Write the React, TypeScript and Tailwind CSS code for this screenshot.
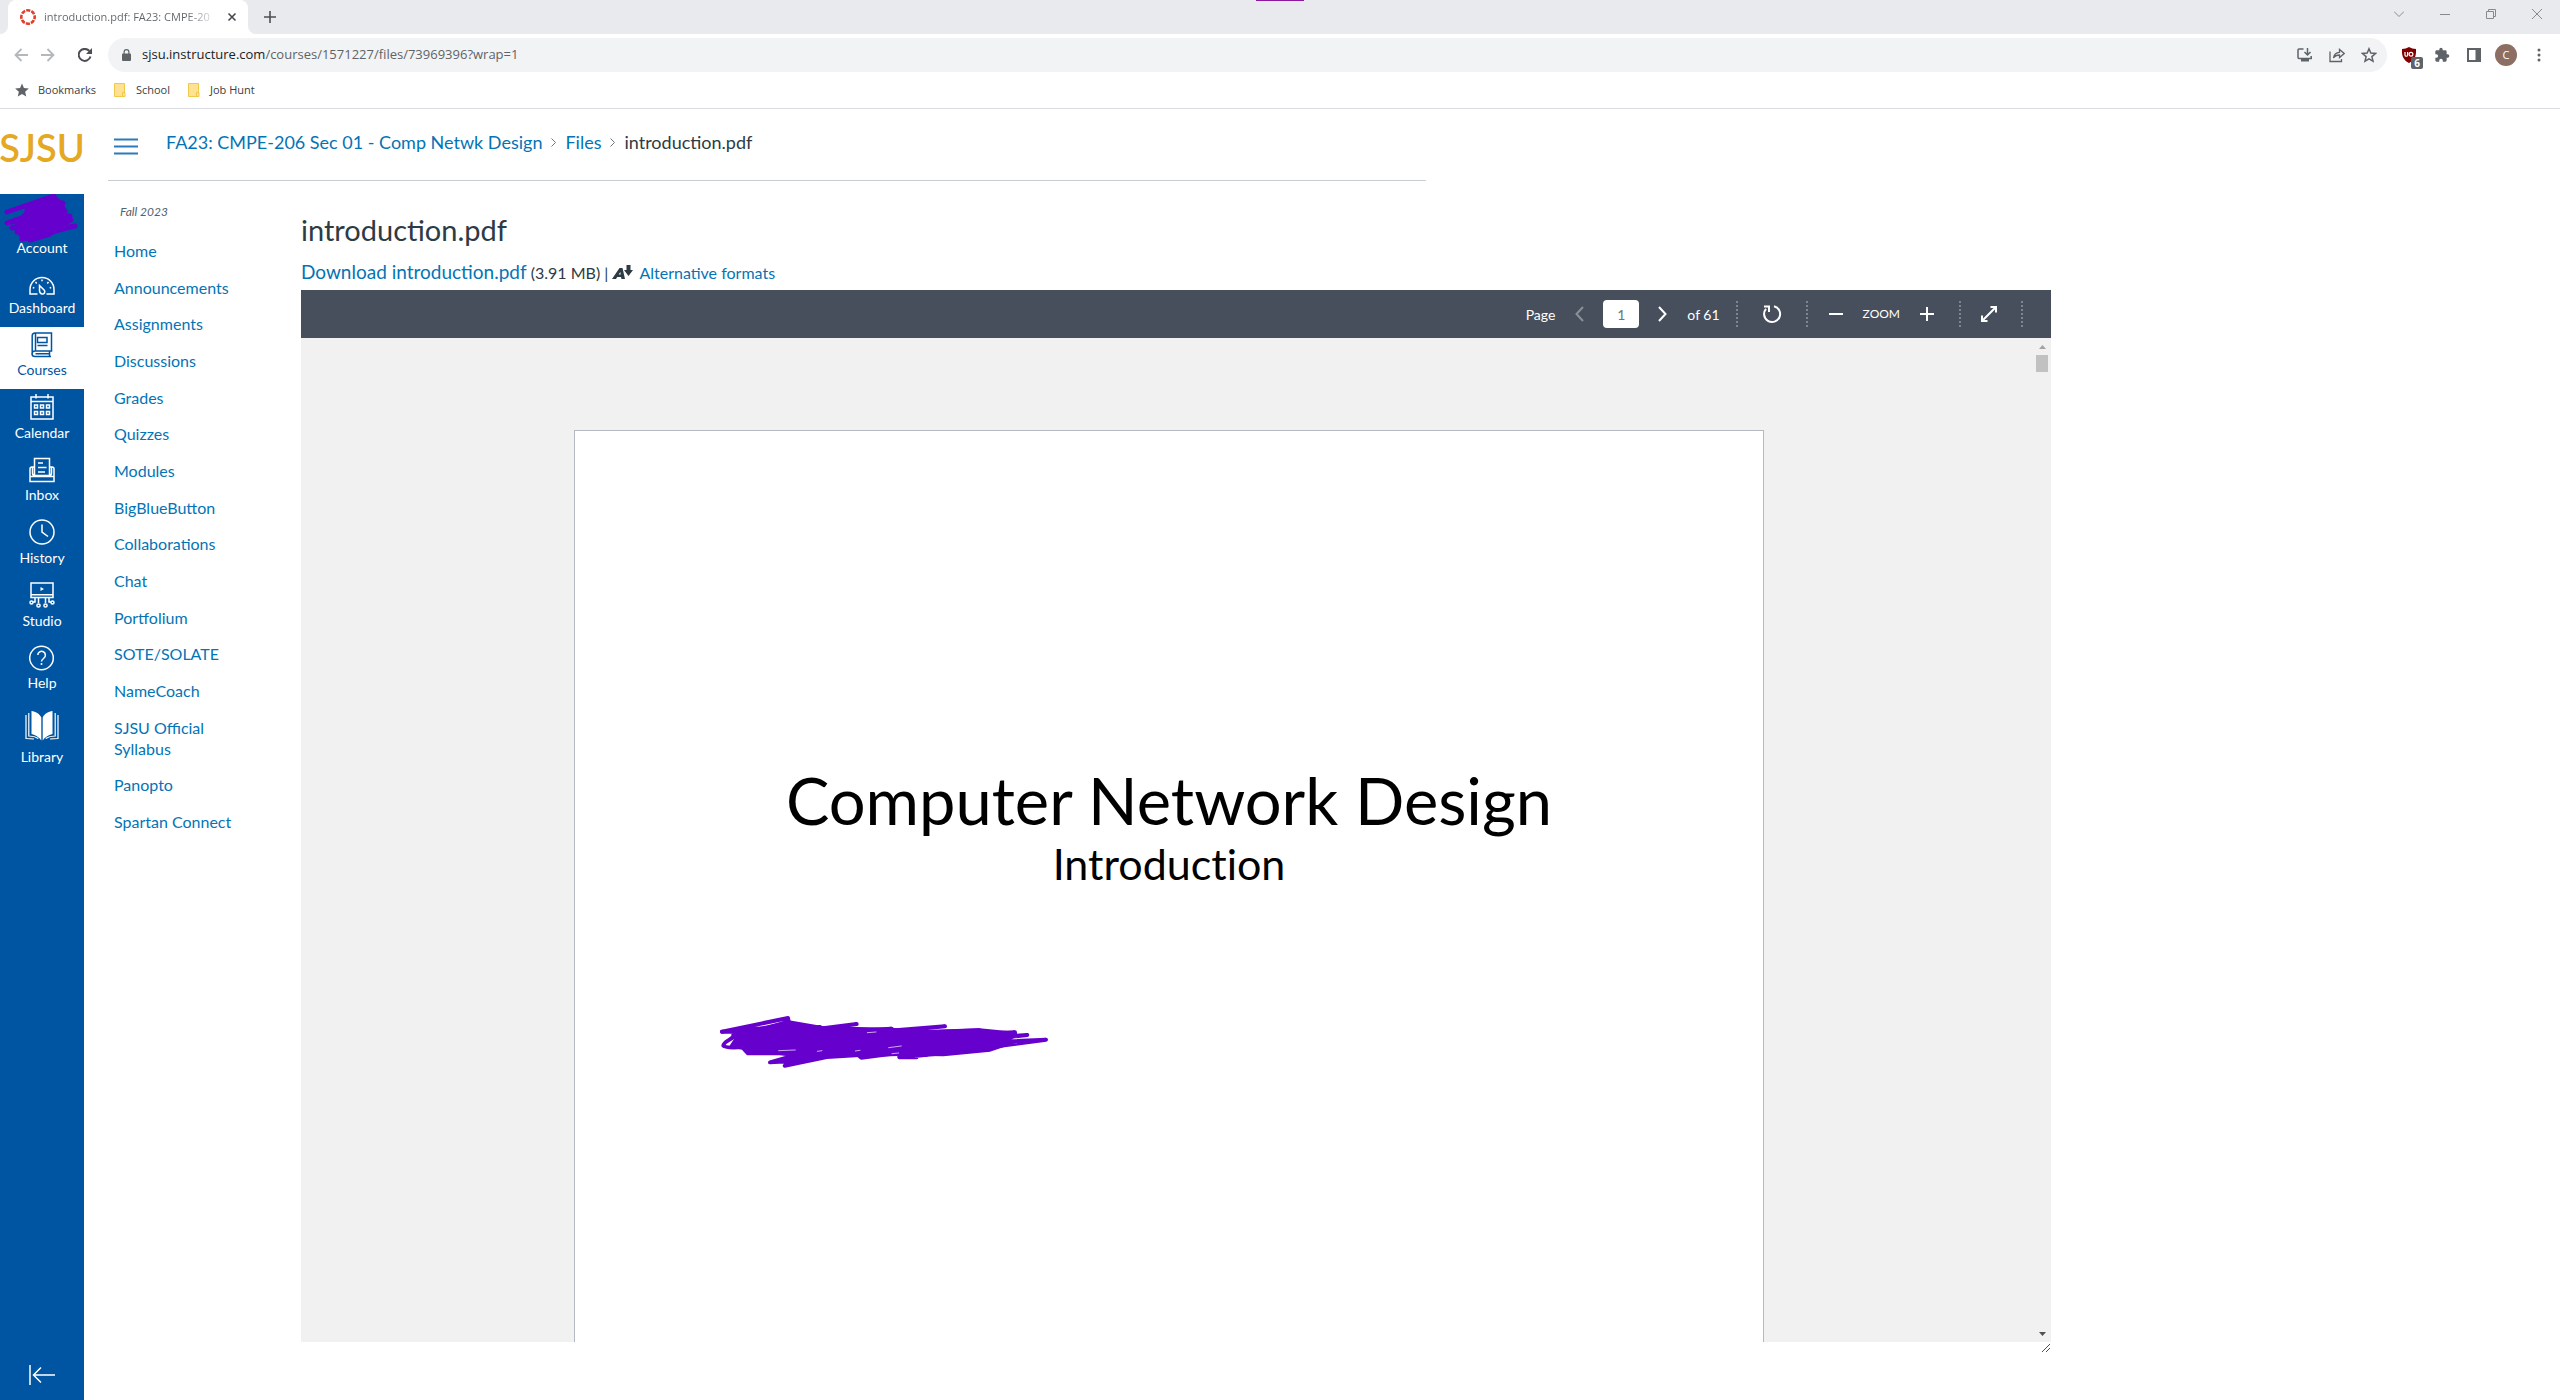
import type { ReactNode } from "react";

const lineIcon = {
  fill: "none",
  stroke: "currentColor",
  strokeWidth: 1.5,
} as const;

function DashboardIcon() {
  return (
    <svg width="26" height="26" viewBox="0 -6 26 26" {...lineIcon}>
      <path d="M8.5 18H1v-4.500a12 12 0 0 1 24 0V18h-7.500" />
      <path d="M10.500 9.500l4.800 4.700c1.400 2-.300 4.200-2.300 3.800-2.400-.500-2.500-2.300-2.500-3.500z" />
      <path d="M13 3.500v1.800M6.500 6l1.200 1.400M19.500 6l-1.200 1.400M3.800 11.500l1.500.500M22.200 11.500l-1.500.500" />
    </svg>
  );
}

function CoursesIcon() {
  return (
    <svg width="22" height="26" viewBox="0 0 22 26" {...lineIcon}>
      <path d="M4 1h16.500v18H4c-4 0-4 5.500 0 5.500h16M1.200 22V4C1.200 2 2.500 1 4 1M4.500 1v18M18.500 19v5M4.500 21.800h14" />
      <path d="M6.500 5.500h9.500v5H6.500zM6.500 13.500h10" />
    </svg>
  );
}

function CalendarIcon() {
  return (
    <svg width="24" height="26" viewBox="0 0 24 26" {...lineIcon}>
      <path d="M1 3h22v22H1zM1 7.500h22M6 0v4.500M18 0v4.500" />
      <path d="M4.500 11h3v3h-3zM10.500 11h3v3h-3zM16.500 11h3v3h-3zM4.500 17.500h3v3h-3zM10.500 17.500h3v3h-3zM16.500 17.500h3v3h-3z" />
    </svg>
  );
}

function InboxIcon() {
  return (
    <svg width="26" height="26" viewBox="0 0 26 26" {...lineIcon}>
      <path d="M5.500 18V1.500h15V18M5.500 10H3c-1.500 0-2 1-2 2v12.500h24V12c0-1-.500-2-2-2h-2.500M1 19.500h24M3.500 10v6c0 1.500.500 2.500 2 2.500h15c1.500 0 2-1 2-2.500v-6" />
      <path d="M9 6h5M9 10.500h8.500M9 15h7" />
    </svg>
  );
}

function HistoryIcon() {
  return (
    <svg width="26" height="26" viewBox="0 0 26 26" {...lineIcon}>
      <circle cx="13" cy="13" r="12" />
      <path d="M13 5.500V13l6 4.500" />
    </svg>
  );
}

function StudioIcon() {
  return (
    <svg width="26" height="26" viewBox="0 0 26 26" {...lineIcon}>
      <path d="M2 1h22v14.500H2zM2 12.800h22M9.500 15.500v5.500M16.500 15.500v5.500M6 15.500V20H4M20 15.500V20h2" />
      <circle cx="9.500" cy="23.500" r="1.600" />
      <circle cx="16.500" cy="23.500" r="1.600" />
      <circle cx="2.500" cy="20.500" r="1.500" />
      <circle cx="23.500" cy="20.500" r="1.500" />
      <path d="M11.500 5l3.500 2-3.500 2z" fill="currentColor" stroke="none" />
    </svg>
  );
}

function HelpIcon() {
  return (
    <svg width="26" height="26" viewBox="0 0 26 26" {...lineIcon}>
      <circle cx="12.500" cy="13" r="11.800" />
      <path d="M8.800 10a3.800 3.800 0 1 1 6 3.200c-1.600 1.200-2.300 1.700-2.300 3.300" />
      <circle cx="12.500" cy="19" r="1" fill="currentColor" stroke="none" />
    </svg>
  );
}

function LibraryIcon() {
  return (
    <svg width="34" height="32" viewBox="0 0 34 32" fill="currentColor">
      <path d="M6.500 1c4 .700 8 2.500 9.800 6.500V30.500c-2-3-5.500-5.500-9.800-6.500zM27.500 1c-4 .700-8 2.500-9.800 6.500V30.500c2-3 5.500-5.500 9.800-6.500z" />
      <path d="M3.800 3v23c3.500 0 7 .800 9.500 2.500M30.200 3v23c-3.500 0-7 .800-9.500 2.500M1 5v23.500c3 0 5.500 0 8 .500M33 5v23.500c-3 0-5.500 0-8 .500" fill="none" stroke="currentColor" strokeWidth="1.200" />
    </svg>
  );
}

function AccountScribble() {
  return (
    <svg width="78" height="50" viewBox="0 0 78 50" fill="none" stroke="#6600cc" strokeWidth="5" strokeLinecap="round" strokeLinejoin="round" aria-hidden="true">
      <path d="M4 18L51 2 24 16 60 9 4 29 62 17 9 34 67 22 14 38 68 26 18 41 72 32 19 45 47 40 27 46" />
      <path d="M30 10L51 2 60 9 62 17 68 26 60 36 46 41 27 46 18 38 14 28z" fill="#6600cc" strokeWidth="2" />
    </svg>
  );
}

function SlideScribble() {
  return (
    <svg width="350" height="75" viewBox="0 0 1050 225" fill="none" stroke="#6600cc" strokeWidth="12" strokeLinecap="round" strokeLinejoin="round" aria-hidden="true">
      <path d="M36 80L234 39 236 50 80 96M80 76L280 60 120 88 330 66 150 94 440 57 200 90 545 71 260 100 705 64 420 92 808 76 500 100 915 82 600 110 952 90 700 118 1008 104 700 145 568 157 620 157" />
      <path d="M78 86C70 104 40 108 40 122q4 8 58 4M36 80l50 0" />
      <path d="M180 172L258 150 440 132 448 150 350 156 224 182 250 168z" fill="#6600cc" />
      <path d="M440 146l14 12 126-16M568 152l80-2" />
      <path d="M70 90L236 52 340 70 545 74 620 82 808 76 915 86 880 120 840 134 700 148 600 146 450 150 254 150 204 144 114 145 98 128 66 122 78 104z" fill="#6600cc" />
      <path d="M536 128l38-5M206 137l50-2M322 139l14-2M472 83l26-2M436 138l14-2M546 146l20-2" stroke="white" strokeWidth="2" />
    </svg>
  );
}

const globalNav: { label: string; icon: ReactNode; height: string; active?: boolean }[] = [
  { label: "Dashboard", icon: <DashboardIcon />, height: "h-[62px]" },
  { label: "Courses", icon: <CoursesIcon />, height: "h-[62px]", active: true },
  { label: "Calendar", icon: <CalendarIcon />, height: "h-[63px]" },
  { label: "Inbox", icon: <InboxIcon />, height: "h-[62px]" },
  { label: "History", icon: <HistoryIcon />, height: "h-[63px]" },
  { label: "Studio", icon: <StudioIcon />, height: "h-[63px]" },
  { label: "Help", icon: <HelpIcon />, height: "h-[62px]" },
  { label: "Library", icon: <LibraryIcon />, height: "h-[74px]" },
];

const courseNav = [
  "Home",
  "Announcements",
  "Assignments",
  "Discussions",
  "Grades",
  "Quizzes",
  "Modules",
  "BigBlueButton",
  "Collaborations",
  "Chat",
  "Portfolium",
  "SOTE/SOLATE",
  "NameCoach",
  "SJSU Official Syllabus",
  "Panopto",
  "Spartan Connect",
];

function TabStrip() {
  return (
    <div className="relative flex h-[34px] items-stretch bg-[#e8eaed]">
      <div className="absolute left-1/2 top-0 h-px w-12 -translate-x-6 bg-[#8a1a9b]" />
      <div className="flex w-2 bg-white">
        <div className="flex-1 rounded-br-lg bg-[#e8eaed]" />
      </div>
      <div className="flex w-[240px] items-center rounded-t-lg bg-white pl-3 pr-2">
        <svg width="16" height="16" viewBox="0 0 16 16" fill="none" stroke="#e13f2b" strokeWidth="2.600" aria-hidden="true">
          <circle cx="8" cy="8" r="6.700" strokeDasharray="4.100 1.162" strokeDashoffset="2" />
        </svg>
        <span className="ml-2 whitespace-nowrap bg-linear-to-r from-[#5f6368] from-85% to-[#d5d7d9] bg-clip-text text-[11px] text-transparent">
          introduction.pdf: FA23: CMPE-20
        </span>
        <button aria-label="Close tab" className="ml-auto text-[#45494d]">
          <svg width="16" height="16" viewBox="0 0 16 16" stroke="currentColor" strokeWidth="1.600">
            <path d="M4.500 4.500l7 7M11.500 4.500l-7 7" />
          </svg>
        </button>
      </div>
      <div className="flex w-2 bg-white">
        <div className="flex-1 rounded-bl-lg bg-[#e8eaed]" />
      </div>
      <button aria-label="New tab" className="ml-2 text-[#4b4f54]">
        <svg width="12" height="12" viewBox="0 0 12 12" stroke="currentColor" strokeWidth="1.600">
          <path d="M6 0v12M0 6h12" />
        </svg>
      </button>
      <div className="ml-auto flex items-center gap-9 pb-[6px] pr-[18px] text-[#868a8f]">
        <button aria-label="Search tabs">
          <svg width="10" height="10" viewBox="0 0 10 10" fill="none" stroke="currentColor"><path d="M0 2.500l5 5 5-5" /></svg>
        </button>
        <button aria-label="Minimize">
          <svg width="10" height="10" viewBox="0 0 10 10" stroke="currentColor"><path d="M0 5.500h10" /></svg>
        </button>
        <button aria-label="Restore">
          <svg width="10" height="10" viewBox="0 0 10 10" fill="none" stroke="currentColor"><path d="M.5 2.500h7v7h-7zM2.500 2.500v-2h7v7h-2" /></svg>
        </button>
        <button aria-label="Close window">
          <svg width="10" height="10" viewBox="0 0 10 10" stroke="currentColor"><path d="M0 0l10 10M10 0L0 10" /></svg>
        </button>
      </div>
    </div>
  );
}

function AddressBar() {
  return (
    <div className="flex h-[42px] items-center pb-[2px] pt-[2px] text-[#5f6368]">
      <div className="flex w-[91px] items-center gap-[13px] pl-[14px]">
        <button aria-label="Back" className="text-[#b5b8bb]">
          <svg width="14" height="14" viewBox="0 0 14 14" fill="none" stroke="currentColor" strokeWidth="1.800"><path d="M14 7H1.500M7.500 1L1.500 7l6 6" /></svg>
        </button>
        <button aria-label="Forward" className="text-[#b5b8bb]">
          <svg width="14" height="14" viewBox="0 0 14 14" fill="none" stroke="currentColor" strokeWidth="1.800"><path d="M0 7h12.500M6.500 1l6 6-6 6" /></svg>
        </button>
        <button aria-label="Reload" className="ml-[10px] text-[#4b4f54]">
          <svg width="14" height="14" viewBox="0 0 14 14" fill="none" stroke="currentColor" strokeWidth="2"><path d="M12.500 8.500A6 6 0 1 1 11.300 3" /><path d="M14 0v6H8z" fill="currentColor" stroke="none" /></svg>
        </button>
      </div>
      <div className="ml-[17px] flex h-[34px] flex-1 items-center rounded-full bg-[#f1f3f4] pl-[14px] pr-[10px]">
        <svg width="9" height="12" viewBox="0 0 9 12" fill="currentColor" aria-hidden="true">
          <path fillRule="evenodd" d="M1.500 4.500V3a3 3 0 0 1 6 0v1.500H8a1 1 0 0 1 1 1V11a1 1 0 0 1-1 1H1a1 1 0 0 1-1-1V5.500a1 1 0 0 1 1-1zm1.200 0h3.600V3a1.800 1.800 0 0 0-3.600 0z" />
        </svg>
        <span className="ml-[11px] text-[13px]">
          <span className="text-[#202124]">sjsu.instructure.com</span>/courses/1571227/files/73969396?wrap=1
        </span>
        <div className="ml-auto flex items-center gap-4">
          <button aria-label="Install">
            <svg width="16" height="16" viewBox="0 0 16 16" fill="none" stroke="currentColor" strokeWidth="1.500"><path d="M6.500 2H2a1 1 0 0 0-1 1v7.500a1 1 0 0 0 1 1h12.200V9M10.500 1v6.500M7.500 5l3 3 3-3" /><path d="M4 12h8v2.500H4z" fill="currentColor" stroke="none" /></svg>
          </button>
          <button aria-label="Share">
            <svg width="16" height="16" viewBox="0 0 16 16" fill="none" stroke="currentColor" strokeWidth="1.300"><path d="M1 4.500v10h11.500V12M4.500 11c.500-4 3-5.500 6-5.700V2.500L15.200 6.500l-4.700 4V8c-3 0-4.800 1-6 3z" /></svg>
          </button>
          <button aria-label="Bookmark this page">
            <svg width="16" height="16" viewBox="0 0 16 16" fill="none" stroke="currentColor" strokeWidth="1.500"><path d="M8 1.800l1.800 4.300 4.700.400-3.600 3.100 1.100 4.600L8 11.800l-4 2.400 1.100-4.600L1.500 6.500l4.700-.400z" /></svg>
          </button>
        </div>
      </div>
      <div className="flex items-center pl-[14px] pr-[13px]">
        <button aria-label="uBlock Origin, 6 blocked" className="relative mr-[17px]">
          <svg width="16" height="16" viewBox="0 0 16 16" aria-hidden="true">
            <path d="M8 0c2 1.300 4.500 2 7 2 .300 6-.500 10.500-7 14C1.500 12.500.700 8 1 2c2.500 0 5-.700 7-2z" fill="#800000" />
            <path d="M4 5v3.200c0 1.400 2.600 1.400 2.600 0V5" fill="none" stroke="white" strokeWidth="1.200" />
            <circle cx="10" cy="7.200" r="1.900" fill="none" stroke="white" strokeWidth="1.200" />
          </svg>
          <span className="absolute left-2.5 top-2.5 flex h-3 w-3 items-center justify-center rounded-xs bg-[#5f6368] text-[10px] font-bold text-white">6</span>
        </button>
        <button aria-label="Extensions">
          <svg width="16" height="16" viewBox="0 0 24 24" fill="currentColor"><path d="M20.500 11H19V7a2 2 0 0 0-2-2h-4V3.500a2.500 2.500 0 0 0-5 0V5H4a2 2 0 0 0-2 2v3.800h1.500a2.700 2.700 0 0 1 0 5.400H2V20a2 2 0 0 0 2 2h3.800v-1.500a2.700 2.700 0 0 1 5.400 0V22H17a2 2 0 0 0 2-2v-4h1.500a2.500 2.500 0 0 0 0-5z" /></svg>
        </button>
        <button aria-label="Side panel" className="ml-[17px]">
          <svg width="14" height="14" viewBox="0 0 14 14" fill="none" stroke="currentColor" strokeWidth="2"><path d="M1 1h12v12H1z" /><path d="M8.500 1H13v12H8.500z" fill="currentColor" stroke="none" /></svg>
        </button>
        <button aria-label="Profile" className="ml-[14px] flex h-[22px] w-[22px] items-center justify-center rounded-full bg-[#8d6e63] text-[11px] text-white">
          C
        </button>
        <button aria-label="Menu" className="ml-[14px]">
          <svg width="16" height="16" viewBox="0 0 16 16" fill="currentColor"><circle cx="8" cy="3" r="1.500" /><circle cx="8" cy="8" r="1.500" /><circle cx="8" cy="13" r="1.500" /></svg>
        </button>
      </div>
    </div>
  );
}

function FolderIcon() {
  return (
    <svg width="12" height="14" viewBox="0 0 12 14" aria-hidden="true">
      <path d="M.5.500h10v13h-10z" fill="#fde293" stroke="#f0c94a" />
      <path d="M8.500 13.500v-4h2.500v4z" fill="#fde293" stroke="#f0c94a" />
    </svg>
  );
}

function BookmarksBar() {
  return (
    <nav aria-label="Bookmarks" className="flex h-[33px] items-center border-b border-[#dadce0] pb-1 pl-[15px] text-[11px] text-[#3c4043]">
      <a href="#bookmarks" className="flex items-center gap-[9px]">
        <svg width="14" height="14" viewBox="0 0 16 16" fill="#5f6368" aria-hidden="true"><path d="M8 .5l2.200 5.200 5.600.500-4.200 3.700 1.200 5.500L8 12.500l-4.800 2.900 1.200-5.500L.2 6.200l5.600-.500z" /></svg>
        Bookmarks
      </a>
      <a href="#school" className="ml-[18px] flex items-center gap-[10px]"><FolderIcon />School</a>
      <a href="#job-hunt" className="ml-[18px] flex items-center gap-[10px]"><FolderIcon />Job Hunt</a>
    </nav>
  );
}

function GlobalNav() {
  return (
    <nav aria-label="Global" className="flex w-[84px] shrink-0 flex-col bg-[#0055a2] text-[14px] text-white">
      <a href="#sjsu" className="flex h-[85px] items-center justify-center bg-white pb-2 text-[38px] font-semibold text-[#e5a823]">
        SJSU
      </a>
      <a href="#account" className="flex h-[71px] flex-col items-center">
        <AccountScribble />
        <span className="-mt-1 leading-4">Account</span>
      </a>
      {globalNav.map((item) => (
        <a
          key={item.label}
          href={"#" + item.label.toLowerCase()}
          className={`flex flex-col items-center justify-end pb-[11px] ${item.height} ${item.active ? "bg-white text-[#0055a2]" : ""}`}
        >
          <span className="flex flex-1 items-center">{item.icon}</span>
          <span className="leading-4">{item.label}</span>
        </a>
      ))}
      <button aria-label="Minimize global navigation" className="mt-auto flex h-[50px] items-center justify-center">
        <svg width="26" height="20" viewBox="0 0 26 20" {...lineIcon}><path d="M1 0v20M26 10H5M12 2.500L4.500 10l7.500 7.500" /></svg>
      </button>
    </nav>
  );
}

function Crumb({ children }: { children: ReactNode }) {
  return <a href="#crumb" className="text-[#0374b5]">{children}</a>;
}

function CrumbArrow() {
  return (
    <svg width="5" height="9" viewBox="0 0 5 9" fill="none" stroke="#6b7780" aria-hidden="true"><path d="M.5.5l4 4-4 4" /></svg>
  );
}

function Divider() {
  return <div className="h-[26px] border-l-2 border-dotted border-[#7d8590]" />;
}

function ViewerToolbar() {
  return (
    <div className="flex h-12 items-center justify-end bg-[#484f5c] pr-7 text-[14px] text-white">
      <label htmlFor="page-number">Page</label>
      <button aria-label="Previous page" className="ml-5 text-[#8b919b]">
        <svg width="9" height="16" viewBox="0 0 9 16" fill="none" stroke="currentColor" strokeWidth="2"><path d="M8 1L1.500 8 8 15" /></svg>
      </button>
      <input id="page-number" defaultValue="1" className="ml-[19px] h-7 w-9 rounded-sm bg-white text-center text-[14px] text-[#6b7280]" />
      <button aria-label="Next page" className="ml-[19px]">
        <svg width="9" height="16" viewBox="0 0 9 16" fill="none" stroke="currentColor" strokeWidth="2"><path d="M1 1l6.500 7L1 15" /></svg>
      </button>
      <span className="ml-5 mr-4">of 61</span>
      <Divider />
      <button aria-label="Rotate" className="mx-6">
        <svg width="20" height="20" viewBox="0 0 20 20" fill="none" stroke="currentColor" strokeWidth="2"><path d="M12 2.200A8 8 0 1 1 4 4.800" /><path d="M2 2.500h5V8" /></svg>
      </button>
      <Divider />
      <button aria-label="Zoom out" className="ml-[21px]">
        <svg width="14" height="14" viewBox="0 0 14 14" stroke="currentColor" strokeWidth="2"><path d="M0 7h14" /></svg>
      </button>
      <span className="mx-5 text-[12px]">ZOOM</span>
      <button aria-label="Zoom in" className="mr-[25px]">
        <svg width="14" height="14" viewBox="0 0 14 14" stroke="currentColor" strokeWidth="2"><path d="M0 7h14M7 0v14" /></svg>
      </button>
      <Divider />
      <button aria-label="Full screen" className="ml-[19px] mr-[23px]">
        <svg width="18" height="18" viewBox="0 0 18 18" fill="none" stroke="currentColor" strokeWidth="2"><path d="M2 16L16 2M10.500 2H16v5.500M2 10.500V16h5.500" /></svg>
      </button>
      <Divider />
    </div>
  );
}

function Viewer() {
  return (
    <section aria-label="Document preview" className="flex flex-1 flex-col">
      <ViewerToolbar />
      <div className="flex flex-1 bg-[#f1f1f1]">
        <div className="flex flex-1 justify-center pl-1 pt-[92px]">
          <article className="flex w-[1190px] flex-col items-center border border-b-0 border-[#b5b9c2] bg-white pt-[329px] text-black">
            <h2 className="text-[65px] leading-[80px]">Computer Network Design</h2>
            <p className="text-[43px] leading-[48px] [font-variant-ligatures:none]">Introduction</p>
            <div className="mt-[117px] w-full pl-[135px]">
              <SlideScribble />
            </div>
          </article>
        </div>
        <div className="flex w-[18px] flex-col items-center pt-[7px] pb-[6px]">
          <svg width="7" height="4" viewBox="0 0 7 4" fill="#a3a3a3" aria-hidden="true"><path d="M3.500 0L7 4H0z" /></svg>
          <div className="mt-[6px] h-[17px] w-3 bg-[#c1c1c1]" />
          <svg className="mt-auto" width="7" height="4" viewBox="0 0 7 4" fill="#505050" aria-hidden="true"><path d="M0 0h7L3.500 4z" /></svg>
        </div>
      </div>
      <div className="flex h-[58px] justify-end pt-[2px] pr-px">
        <svg width="8" height="8" viewBox="0 0 8 8" stroke="#505050" aria-hidden="true"><path d="M0 8l8-8M4 8l4-4" /></svg>
      </div>
    </section>
  );
}

export default function App() {
  return (
    <div className="flex min-h-screen flex-col bg-white font-['Lato',sans-serif]">
      <header className="font-['Open_Sans',sans-serif]">
        <TabStrip />
        <AddressBar />
        <BookmarksBar />
      </header>
      <div className="flex flex-1">
        <GlobalNav />
        <div className="flex min-w-0 flex-1 flex-col pl-6">
          <div className="flex h-[72px] w-full max-w-[1318px] items-center border-b border-[#c7cdd1] pb-[4px] pl-[6px]">
            <button aria-label="Toggle course navigation" className="mt-2 text-[#2b7abc]">
              <svg width="24" height="17" viewBox="0 0 24 17" stroke="currentColor" strokeWidth="2"><path d="M0 1.500h24M0 8.500h24M0 15.500h24" /></svg>
            </button>
            <nav aria-label="Breadcrumb" className="ml-7 flex items-center gap-[9px] text-[18px] text-[#2d3b45]">
              <Crumb>FA23: CMPE-206 Sec 01 - Comp Netwk Design</Crumb>
              <CrumbArrow />
              <Crumb>Files</Crumb>
              <CrumbArrow />
              <span>introduction.pdf</span>
            </nav>
          </div>
          <div className="flex flex-1">
            <aside className="w-[193px] shrink-0 pl-[6px] pt-[23px]">
              <p className="pl-[6px] text-[12px] italic leading-4 text-[#55616b]">Fall 2023</p>
              <nav aria-label="Course" className="mt-5 flex h-[592px] flex-col justify-between text-[16px] leading-[21px] text-[#0374b5]">
                {courseNav.map((label) => (
                  <a key={label} href="#course" className="block w-32">{label}</a>
                ))}
              </nav>
            </aside>
            <main className="flex w-full max-w-[1750px] flex-col text-[#2d3b45]">
              <h1 className="pt-[31px] text-[29px] leading-9">introduction.pdf</h1>
              <div className="mt-[10px] flex h-8 items-baseline whitespace-pre text-[16px]">
                <a href="#download" className="text-[19px] text-[#0374b5]">Download introduction.pdf</a>
                <span> (3.91 MB) | </span>
                <a href="#formats" className="flex items-baseline gap-[6px] text-[#0374b5]">
                  <svg width="21" height="14" viewBox="0 0 21 14" fill="#2d3b45" aria-hidden="true">
                    <path fillRule="evenodd" d="M0 14L7.500 3h3L13 14h-3.500l-.500-2H5.200L4 14zM6.700 9.500h2L8.300 7z" />
                    <path d="M14.500 0h4v5H21l-4.500 6L12 5h2.500z" />
                  </svg>
                  Alternative formats
                </a>
              </div>
              <Viewer />
            </main>
          </div>
        </div>
      </div>
    </div>
  );
}
